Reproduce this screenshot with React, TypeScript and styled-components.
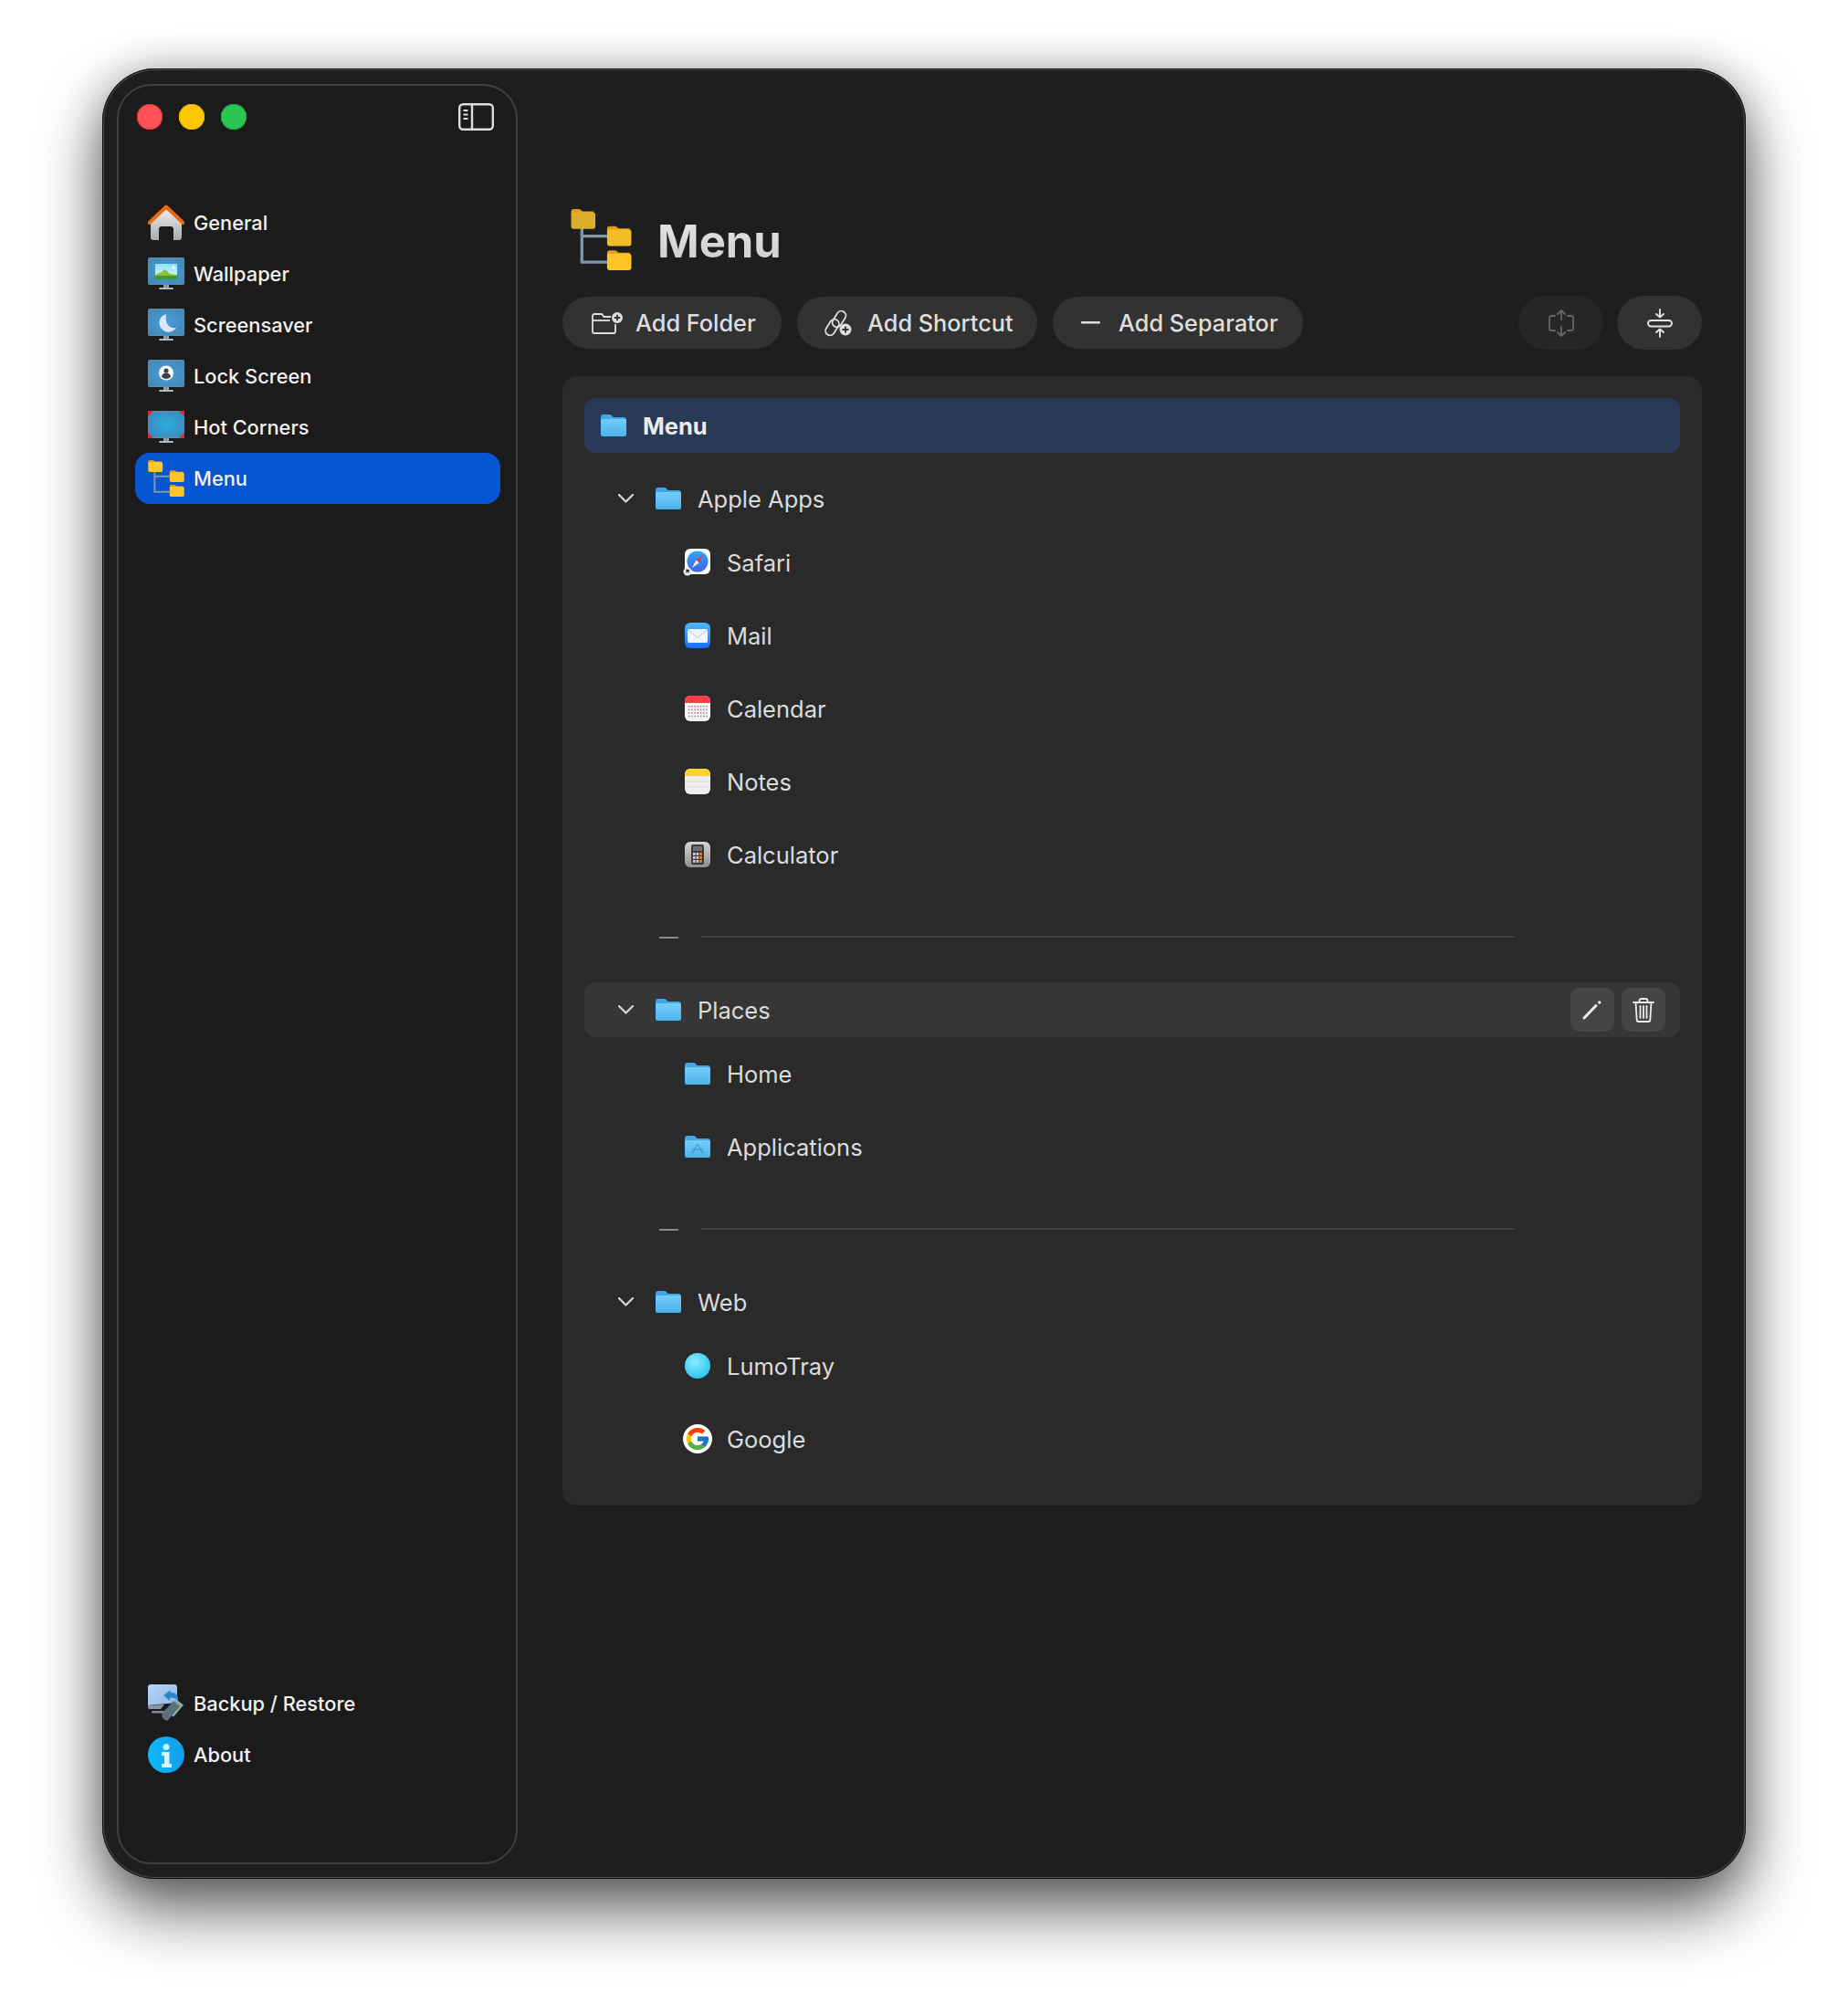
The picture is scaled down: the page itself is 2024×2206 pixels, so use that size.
import React from "react";
import styled, { createGlobalStyle } from "styled-components";

const Global = createGlobalStyle`
  html, body { margin: 0; background: #fff; }
  body { font-family: Inter, "Noto Sans", "Liberation Sans", sans-serif; -webkit-font-smoothing: antialiased; }
`;

const Page = styled.div`
  width: 2024px;
  height: 2206px;
  padding: 75px 0 0 112px;
  box-sizing: border-box;
  overflow: hidden;
`;

const Win = styled.div`
  width: 1800px;
  height: 1983px;
  box-sizing: border-box;
  display: flex;
  background: #1e1e1e;
  border-radius: 58px;
  box-shadow: inset 0 0 0 1px #0c0c0c, inset 0 0 0 2px #4e4e4e, 0 34px 70px rgba(0, 0, 0, 0.62), 0 0 44px rgba(0, 0, 0, 0.22);
`;

const Sidebar = styled.aside`
  width: 439px;
  height: 1950px;
  margin: 17px 0 0 16px;
  box-sizing: border-box;
  flex: none;
  display: flex;
  flex-direction: column;
  background: #1b1b1b;
  border: 2px solid #3f3f3f;
  border-radius: 38px;
  padding: 18px 17px 90px 18px;
`;

const TitleBar = styled.div`
  height: 32px;
  display: flex;
  align-items: center;
  gap: 18px;
  padding: 0 7px 0 2px;
  margin-bottom: 72px;
`;

const Light = styled.span<{ $c: string; $b: string }>`
  width: 28px;
  height: 28px;
  border-radius: 50%;
  background: ${(p) => p.$c};
  box-shadow: inset 0 0 0 1px ${(p) => p.$b};
`;

const ToggleBtn = styled.span`
  margin-left: auto;
  display: flex;
  svg { display: block; }
`;

const Nav = styled.nav<{ $bottom?: boolean }>`
  display: flex;
  flex-direction: column;
  ${(p) => (p.$bottom ? "margin-top: auto;" : "")}
`;

const NavRow = styled.div<{ $on?: boolean }>`
  height: 56px;
  display: flex;
  align-items: center;
  gap: 10px;
  padding-left: 14px;
  border-radius: 16px;
  font-size: 21.8px;
  font-weight: 450;
  color: #f1f1f1;
  background: ${(p) => (p.$on ? "#0656d2" : "transparent")};
  svg { flex: none; display: block; }
`;

const Main = styled.main`
  flex: 1;
  min-width: 0;
  padding: 153px 48px 0 49px;
`;

const Header = styled.header`
  height: 68px;
  display: flex;
  align-items: center;
  padding-left: 9px;
  gap: 28px;
  svg { display: block; }
`;

const Title = styled.h1`
  margin: 0;
  padding-top: 5px;
  font-size: 49px;
  line-height: 68px;
  font-weight: 700;
  background: linear-gradient(180deg, #ececec, #c8c8c8);
  -webkit-background-clip: text;
  background-clip: text;
  color: transparent;
`;

const Toolbar = styled.div`
  display: flex;
  align-items: center;
  gap: 17px;
  margin: 28px 0 29px;
  height: 59px;
`;

const PillBtn = styled.button<{ $w: number; $pad: number; $gap: number }>`
  width: ${(p) => p.$w}px;
  height: 57px;
  padding: 0 0 0 ${(p) => p.$pad}px;
  border: 0;
  border-radius: 28px;
  background: #323232;
  color: #dedede;
  font: 450 25.3px Inter, sans-serif;
  display: flex;
  align-items: center;
  gap: ${(p) => p.$gap}px;
  svg { display: block; flex: none; }
`;

const RoundBtn = styled.button<{ $off?: boolean }>`
  width: 93px;
  height: 59px;
  padding: 0;
  border: 0;
  border-radius: 30px;
  background: ${(p) => (p.$off ? "#262626" : "#323232")};
  display: flex;
  align-items: center;
  justify-content: center;
  ${(p) => (p.$off ? "margin-left: auto; margin-right: -2px;" : "")}
  svg { display: block; }
`;

const Panel = styled.section`
  height: 1237px;
  box-sizing: border-box;
  background: #2a2a2a;
  border-radius: 16px;
  padding: 24px 24px 33px;
`;

const RootRow = styled.div`
  height: 60px;
  display: flex;
  align-items: center;
  gap: 18px;
  padding-left: 18px;
  margin-bottom: 20px;
  border-radius: 12px;
  background: #283a58;
  color: #ececec;
  font-size: 25.5px;
  font-weight: 650;
  svg { display: block; flex: none; }
`;

const FolderRow = styled.div<{ $hover?: boolean }>`
  height: 60px;
  display: flex;
  align-items: center;
  padding: 0 16px 0 37px;
  border-radius: 12px;
  background: ${(p) => (p.$hover ? "#363636" : "transparent")};
  color: #dcdcdc;
  font-size: 25.5px;
  svg { display: block; flex: none; }
`;

const Chevron = styled.span`
  width: 17px;
  margin-right: 24px;
  display: flex;
`;

const FolderName = styled.span`
  margin-left: 18px;
`;

const RowActions = styled.div`
  margin-left: auto;
  display: flex;
  gap: 8px;
`;

const ActionBtn = styled.button`
  width: 48px;
  height: 48px;
  padding: 0;
  border: 0;
  border-radius: 10px;
  background: #454545;
  display: flex;
  align-items: center;
  justify-content: center;
`;

const ItemRow = styled.div`
  height: 80px;
  display: flex;
  align-items: center;
  gap: 18px;
  padding-left: 110px;
  color: #dcdcdc;
  font-size: 25.5px;
  svg { display: block; flex: none; }
`;

const SepRow = styled.div`
  height: 100px;
  display: flex;
  align-items: center;
  padding-left: 82px;
  gap: 25px;
`;

const SepDash = styled.span`
  width: 21px;
  height: 2px;
  margin-top: 2px;
  background: #8a8a8a;
`;

const SepLine = styled.span`
  width: 891px;
  height: 2px;
  background: #424242;
`;

const SafariSvg = styled.svg`
  margin-left: -2px;
`;

const GoogleSvg = styled.svg`
  margin: 0 -2px;
`;

/* ---------- icons ---------- */

const FolderIcon = ({ id }: { id: string }) => (
  <svg width="28" height="24" viewBox="0 0 28 24">
    <defs>
      <linearGradient id={id} x1="0" y1="0" x2="0" y2="1">
        <stop offset="0" stopColor="#74cdf9" />
        <stop offset="1" stopColor="#4ab2ec" />
      </linearGradient>
    </defs>
    <path d="M0 3a3 3 0 0 1 3-3h6.5c1.2 0 1.8.6 2.5 1.3L13.5 3H25a3 3 0 0 1 3 3v4H0z" fill="#3fa9e6" />
    <path d="M0 7a2 2 0 0 1 2-2h24a2 2 0 0 1 2 2v15a2 2 0 0 1-2 2H2a2 2 0 0 1-2-2z" fill={`url(#${id})`} />
  </svg>
);

const AppsFolderIcon = () => (
  <svg width="28" height="24" viewBox="0 0 28 24">
    <defs>
      <linearGradient id="appf" x1="0" y1="0" x2="0" y2="1">
        <stop offset="0" stopColor="#74cdf9" />
        <stop offset="1" stopColor="#4ab2ec" />
      </linearGradient>
    </defs>
    <path d="M0 3a3 3 0 0 1 3-3h6.5c1.2 0 1.8.6 2.5 1.3L13.5 3H25a3 3 0 0 1 3 3v4H0z" fill="#3fa9e6" />
    <path d="M0 7a2 2 0 0 1 2-2h24a2 2 0 0 1 2 2v15a2 2 0 0 1-2 2H2a2 2 0 0 1-2-2z" fill="url(#appf)" />
    <path d="M14 9l-5 9M14 9l5 9M8 15h12M7 18h3M18 18h3" stroke="#3a94cc" strokeWidth="1" fill="none" />
  </svg>
);

const ChevronIcon = () => (
  <svg width="17" height="10" viewBox="0 0 17 10">
    <path d="M1 1l7.5 7.5L16 1" stroke="#d8d8d8" strokeWidth="2.200" fill="none" strokeLinecap="round" strokeLinejoin="round" />
  </svg>
);

const TREE_FOLDERS = [
  [0, 0],
  [40, 19],
  [40, 46],
];

const TreeIcon = ({ w, colors }: { w: number; colors: string[] }) => (
  <svg width={w} height={w} viewBox="0 0 67 68">
    <path d="M12 20v39h28M12 30h28" stroke="#7f97ad" strokeWidth="3.400" fill="none" />
    {TREE_FOLDERS.map(([x, y], i) => (
      <g key={i} transform={`translate(${x} ${y})`}>
        <path d="M0 3a3 3 0 0 1 3-3h6c2 0 2.500 2.500 4 2.500h12v4H0z" fill="#e89a1e" />
        <rect y="3.500" width="27" height="18.500" rx="3" fill={colors[i]} />
      </g>
    ))}
  </svg>
);

const HomeIcon = () => (
  <svg width="40" height="40" viewBox="0 0 40 40">
    <defs>
      <linearGradient id="homeb" x1="0" y1="0" x2="0" y2="1">
        <stop offset="0" stopColor="#ededed" />
        <stop offset="1" stopColor="#a9a9a9" />
      </linearGradient>
    </defs>
    <path d="M3 19L20 5l17 14v17a3 3 0 0 1-3 3h-6V27a3 3 0 0 0-3-3h-10a3 3 0 0 0-3 3v12H6a3 3 0 0 1-3-3z" fill="url(#homeb)" />
    <path d="M1.500 20L20 2.500 38.500 20" stroke="#e86a10" strokeWidth="4" fill="none" strokeLinecap="round" strokeLinejoin="round" />
  </svg>
);

const Monitor = ({ id, children, hot }: { id: string; children?: React.ReactNode; hot?: boolean }) => (
  <svg width="40" height="36" viewBox="0 0 40 36">
    <defs>
      <radialGradient id={id} cx="50%" cy="50%" r="65%">
        <stop offset="0" stopColor={hot ? "#2aaede" : "#4b9fd4"} />
        <stop offset="1" stopColor={hot ? "#3e86b8" : "#3f88bb"} />
      </radialGradient>
    </defs>
    <rect x="0.500" y="0.500" width="39" height="29" rx="1" fill={`url(#${id})`} stroke="#6b8ba3" />
    <rect x="17" y="30" width="6" height="3" fill="#8f9aa2" />
    <rect x="12" y="33" width="16" height="2" rx="1" fill="#b2b8bc" />
    {children}
  </svg>
);

const WallpaperIcon = () => (
  <Monitor id="m1">
    <defs>
      <linearGradient id="wsky" x1="0" y1="0" x2="0" y2="1">
        <stop offset="0" stopColor="#8fe4f6" />
        <stop offset="1" stopColor="#d9f5f5" />
      </linearGradient>
    </defs>
    <rect x="8" y="7" width="24" height="17" fill="url(#wsky)" />
    <circle cx="28" cy="11" r="1.600" fill="#fff" />
    <path d="M8 19l7-3 4-3 5 5 8 1v5H8z" fill="#8fbf3a" />
    <path d="M8 20h24v4H8z" fill="#3e9a2e" />
  </Monitor>
);

const MoonIcon = () => (
  <Monitor id="m2">
    <path d="M20 6a10 10 0 1 0 11 15c-6 1.500-13-3-11-15z" fill="#dbe6f8" />
  </Monitor>
);

const LockIcon = () => (
  <Monitor id="m3">
    <circle cx="20" cy="14.500" r="8" fill="#fff" />
    <circle cx="20" cy="12" r="2.600" fill="#3b4148" />
    <path d="M15 19c0-3 2.200-4.500 5-4.500s5 1.500 5 4.500a8 8 0 0 1-10 0z" fill="#3b4148" />
  </Monitor>
);

const HotCornerIcon = () => (
  <Monitor id="m4" hot>
    <path d="M0 0h6L0 6zM40 0h-6l6 6zM0 30h6l-6-6zM40 30h-6l6-6z" fill="#e3242b" />
  </Monitor>
);

const BackupIcon = () => (
  <svg width="40" height="42" viewBox="0 0 40 42">
    <defs>
      <linearGradient id="bku" x1="0" y1="0" x2="1" y2="1">
        <stop offset="0" stopColor="#b6d6f5" />
        <stop offset="1" stopColor="#8fb9e3" />
      </linearGradient>
    </defs>
    <path d="M0 3a3 3 0 0 1 3-3h26a3 3 0 0 1 3 3v17L0 23z" fill="url(#bku)" />
    <path d="M0 23l18-1-4 5H2a2 2 0 0 1-2-2z" fill="#8795a0" />
    <rect x="4" y="29" width="16" height="2.500" rx="1.200" fill="#7e8a94" />
    <path d="M33 18c1-6-3-10-9-9l1-3-8 6 7 6 0-3c4-1 7 0 9 3z" fill="#2a86c8" />
    <path d="M30 15.500l9 7-11 13-3-2.500z" fill="#9aa6ad" />
    <path d="M17 30l11-12 7 6-12 14c-1.500 2-3 2-5 .5l-2-2c-1.500-2-1-4 1-6.500z" fill="#56727f" />
    <circle cx="21" cy="35" r="1.300" fill="#e8313a" />
  </svg>
);

const InfoIcon = () => (
  <svg width="40" height="40" viewBox="0 0 40 40">
    <defs>
      <linearGradient id="inf" x1="0" y1="0" x2="1" y2="0">
        <stop offset="0" stopColor="#0cbaf8" />
        <stop offset="1" stopColor="#149ee8" />
      </linearGradient>
    </defs>
    <circle cx="20" cy="20" r="20" fill="url(#inf)" />
    <circle cx="20" cy="11.500" r="3.500" fill="#cdeffd" />
    <path d="M15 17h8.500v13H26v4H15v-4h3v-9h-3z" fill="#d9f3fd" />
  </svg>
);

const SidebarToggle = () => (
  <svg width="39" height="30" viewBox="0 0 39 30" fill="none" stroke="#dedede" strokeWidth="2.400">
    <rect x="1.200" y="1.200" width="36.600" height="27.600" rx="4" />
    <path d="M15 1.200v27.600" />
    <path d="M5.500 8h5M5.500 12.500h5M5.500 17h5" strokeWidth="1.800" />
  </svg>
);

const AddFolderGlyph = () => (
  <svg width="34" height="24" viewBox="0 0 34 24" fill="none" stroke="#dedede" strokeWidth="1.800">
    <path d="M21 5H13.500L11 2H3a2 2 0 0 0-2 2v17a2 2 0 0 0 2 2h21a2 2 0 0 0 2-2V13" />
    <path d="M1 9h19" />
    <circle cx="28" cy="6" r="6" fill="#dedede" stroke="none" />
    <path d="M28 2.800v6.400M24.800 6h6.400" stroke="#323232" strokeWidth="1.800" />
  </svg>
);

const ShortcutGlyph = () => (
  <svg width="30" height="28" viewBox="0 0 30 28" fill="none" stroke="#dedede" strokeWidth="1.800">
    <rect x="11" y="0" width="10" height="19" rx="5" transform="rotate(32 16 9.500)" />
    <rect x="3.500" y="9" width="10" height="19" rx="5" transform="rotate(32 8.500 18.500)" />
    <circle cx="23" cy="21" r="6.500" fill="#dedede" stroke="none" />
    <path d="M23 17.500v7M19.500 21h7" stroke="#323232" strokeWidth="1.800" />
  </svg>
);

const MinusGlyph = () => (
  <svg width="21" height="3" viewBox="0 0 21 3">
    <rect width="21" height="2.400" rx="1" fill="#dedede" />
  </svg>
);

const ExpandGlyph = () => (
  <svg width="28" height="30" viewBox="0 0 28 30" fill="none" stroke="#666" strokeWidth="1.800" strokeLinecap="round" strokeLinejoin="round">
    <path d="M7 7H3a2 2 0 0 0-2 2v12a2 2 0 0 0 2 2h4M21 7h4a2 2 0 0 1 2 2v12a2 2 0 0 1-2 2h-4" />
    <path d="M14 1v10M10 5l4-4 4 4M14 29V19M10 25l4 4 4-4" />
  </svg>
);

const CollapseGlyph = () => (
  <svg width="28" height="32" viewBox="0 0 28 32" fill="none" stroke="#e2e2e2" strokeWidth="1.900" strokeLinecap="round" strokeLinejoin="round">
    <rect x="1" y="13" width="26" height="6.500" rx="3.250" />
    <path d="M14 1v8.500M10 6l4 3.500L18 6M14 31v-8.500M10 26l4-3.500 4 3.500" />
  </svg>
);

const PencilGlyph = () => (
  <svg width="22" height="22" viewBox="0 0 22 22" fill="none" stroke="#ececec" strokeLinecap="round">
    <path d="M2 20L15 6.500" strokeWidth="3" />
    <circle cx="18.800" cy="3" r="1.700" fill="#ececec" stroke="none" />
  </svg>
);

const TrashGlyph = () => (
  <svg width="24" height="27" viewBox="0 0 24 27" fill="none" stroke="#ececec" strokeWidth="1.800" strokeLinecap="round">
    <path d="M1 5h22M7.500 5V3a2 2 0 0 1 2-2h5a2 2 0 0 1 2 2v2" />
    <path d="M3.500 5l1.200 19a2 2 0 0 0 2 2h10.600a2 2 0 0 0 2-2L20.500 5" />
    <path d="M8.500 9v13M12 9v13M15.500 9v13" />
  </svg>
);

const SafariIcon = () => (
  <SafariSvg width="30" height="30" viewBox="0 0 30 30">
    <defs>
      <linearGradient id="saf" x1="0" y1="0" x2="0" y2="1">
        <stop offset="0" stopColor="#2fa8f5" />
        <stop offset="1" stopColor="#3e62ee" />
      </linearGradient>
    </defs>
    <rect x="2" y="0" width="28" height="28" rx="6" fill="#fbfbfb" />
    <circle cx="16" cy="14" r="11.500" fill="url(#saf)" />
    <path d="M22 7l-4.500 8.500-3-3z" fill="#ef3f3a" />
    <path d="M10 21l4.500-8.500 3 3z" fill="#fff" />
    <circle cx="5" cy="25" r="4.500" fill="#e8e8e8" />
    <path d="M3.500 27l0-4.500 4 .8-1.400 1 1 1.400-1 .8-1-1.400z" fill="#222" />
  </SafariSvg>
);

const MailIcon = () => (
  <svg width="28" height="28" viewBox="0 0 28 28">
    <defs>
      <linearGradient id="mail" x1="0" y1="0" x2="0" y2="1">
        <stop offset="0" stopColor="#4cb9fb" />
        <stop offset="1" stopColor="#1a6ef5" />
      </linearGradient>
    </defs>
    <rect width="28" height="28" rx="6" fill="url(#mail)" />
    <rect x="3" y="7" width="22" height="15" rx="2" fill="#f1f6fe" />
    <path d="M3.500 8L14 16.500 24.500 8" stroke="#a9c8f2" strokeWidth="1" fill="none" />
  </svg>
);

const CalendarIcon = () => (
  <svg width="28" height="28" viewBox="0 0 28 28">
    <rect width="28" height="28" rx="6" fill="#f4f4f4" />
    <path d="M0 8V6a6 6 0 0 1 6-6h16a6 6 0 0 1 6 6v2z" fill="#fa3e48" />
    {[0, 1, 2, 3].map((r) =>
      [0, 1, 2, 3, 4, 5, 6].map((c) => (
        <rect key={`${r}-${c}`} x={4 + c * 3.200} y={11 + r * 3.600} width="1.500" height="1.500" fill={r === 2 && c === 3 ? "#f23b45" : "#8a8a8a"} />
      )),
    )}
  </svg>
);

const NotesIcon = () => (
  <svg width="28" height="28" viewBox="0 0 28 28">
    <rect width="28" height="28" rx="6" fill="#efefef" />
    <path d="M0 8V6a6 6 0 0 1 6-6h16a6 6 0 0 1 6 6v2z" fill="#ffd12e" />
    <path d="M0 14h28M0 20h28" stroke="#dcdcdc" strokeWidth="1" />
  </svg>
);

const CalculatorIcon = () => (
  <svg width="28" height="28" viewBox="0 0 28 28">
    <defs>
      <linearGradient id="calc" x1="0" y1="0" x2="0" y2="1">
        <stop offset="0" stopColor="#d4d4d4" />
        <stop offset="1" stopColor="#8f8f8f" />
      </linearGradient>
    </defs>
    <rect width="28" height="28" rx="6" fill="url(#calc)" />
    <rect x="7" y="3" width="14" height="22" rx="2" fill="#3a3a3a" />
    <rect x="9" y="5" width="10" height="5" fill="#6f6f6f" />
    {[0, 1, 2].map((r) =>
      [0, 1, 2].map((c) => (
        <rect key={`${r}-${c}`} x={9 + c * 3.600} y={12 + r * 4} width="2.600" height="2.800" fill={c === 2 ? "#f08a1d" : "#d8d8d8"} />
      )),
    )}
  </svg>
);

const LumoIcon = () => (
  <svg width="28" height="28" viewBox="0 0 28 28">
    <defs>
      <radialGradient id="lumo" cx="40%" cy="35%" r="70%">
        <stop offset="0" stopColor="#8cecff" />
        <stop offset="1" stopColor="#27c4ee" />
      </radialGradient>
    </defs>
    <circle cx="14" cy="14" r="14" fill="url(#lumo)" />
  </svg>
);

const GoogleIcon = () => (
  <GoogleSvg width="32" height="32" viewBox="0 0 32 32">
    <circle cx="16" cy="16" r="16" fill="#fff" />
    <g transform="translate(1.600 1.600) scale(0.6)">
      <path fill="#FFC107" d="M43.600 20.100H42V20H24v8h11.300C33.700 32.700 29.200 36 24 36c-6.600 0-12-5.400-12-12s5.400-12 12-12c3.100 0 5.800 1.200 8 3l5.700-5.700C34 6.100 29.300 4 24 4 13 4 4 13 4 24s9 20 20 20 20-9 20-20c0-1.300-.1-2.700-.4-3.900z" />
      <path fill="#FF3D00" d="M6.300 14.700l6.600 4.800C14.700 15.100 19 12 24 12c3.100 0 5.800 1.200 8 3l5.700-5.700C34 6.100 29.300 4 24 4 16.300 4 9.700 8.300 6.300 14.700z" />
      <path fill="#4CAF50" d="M24 44c5.200 0 9.900-2 13.400-5.200l-6.200-5.200C29.200 35.100 26.700 36 24 36c-5.200 0-9.600-3.300-11.300-8l-6.500 5C9.500 39.600 16.200 44 24 44z" />
      <path fill="#1976D2" d="M43.600 20.100H42V20H24v8h11.300c-.8 2.200-2.200 4.200-4.100 5.600l6.200 5.200C37 39.200 44 34 44 24c0-1.300-.1-2.700-.4-3.900z" />
    </g>
  </GoogleSvg>
);

export default function App() {
  return (
    <>
      <Global />
      <Page>
        <Win>
          <Sidebar>
            <TitleBar>
              <Light $c="#ff5257" $b="#e6303a" />
              <Light $c="#fdc700" $b="#e8b400" />
              <Light $c="#2dc653" $b="#1fb042" />
              <ToggleBtn>
                <SidebarToggle />
              </ToggleBtn>
            </TitleBar>
            <Nav>
              <NavRow><HomeIcon />General</NavRow>
              <NavRow><WallpaperIcon />Wallpaper</NavRow>
              <NavRow><MoonIcon />Screensaver</NavRow>
              <NavRow><LockIcon />Lock Screen</NavRow>
              <NavRow><HotCornerIcon />Hot Corners</NavRow>
              <NavRow $on><TreeIcon w={40} colors={["#ffc62e", "#ffc62e", "#ffc62e"]} />Menu</NavRow>
            </Nav>
            <Nav $bottom>
              <NavRow><BackupIcon />Backup / Restore</NavRow>
              <NavRow><InfoIcon />About</NavRow>
            </Nav>
          </Sidebar>
          <Main>
            <Header>
              <TreeIcon w={67} colors={["#dcae2c", "#f4bc26", "#ffc524"]} />
              <Title>Menu</Title>
            </Header>
            <Toolbar>
              <PillBtn $w={240} $pad={32} $gap={14}><AddFolderGlyph />Add Folder</PillBtn>
              <PillBtn $w={263} $pad={30} $gap={17}><ShortcutGlyph />Add Shortcut</PillBtn>
              <PillBtn $w={274} $pad={31} $gap={20}><MinusGlyph />Add Separator</PillBtn>
              <RoundBtn $off><ExpandGlyph /></RoundBtn>
              <RoundBtn><CollapseGlyph /></RoundBtn>
            </Toolbar>
            <Panel>
              <RootRow><FolderIcon id="f0" />Menu</RootRow>
              <FolderRow>
                <Chevron><ChevronIcon /></Chevron>
                <FolderIcon id="f1" />
                <FolderName>Apple Apps</FolderName>
              </FolderRow>
              <ItemRow><SafariIcon />Safari</ItemRow>
              <ItemRow><MailIcon />Mail</ItemRow>
              <ItemRow><CalendarIcon />Calendar</ItemRow>
              <ItemRow><NotesIcon />Notes</ItemRow>
              <ItemRow><CalculatorIcon />Calculator</ItemRow>
              <SepRow><SepDash /><SepLine /></SepRow>
              <FolderRow $hover>
                <Chevron><ChevronIcon /></Chevron>
                <FolderIcon id="f2" />
                <FolderName>Places</FolderName>
                <RowActions>
                  <ActionBtn><PencilGlyph /></ActionBtn>
                  <ActionBtn><TrashGlyph /></ActionBtn>
                </RowActions>
              </FolderRow>
              <ItemRow><FolderIcon id="f3" />Home</ItemRow>
              <ItemRow><AppsFolderIcon />Applications</ItemRow>
              <SepRow><SepDash /><SepLine /></SepRow>
              <FolderRow>
                <Chevron><ChevronIcon /></Chevron>
                <FolderIcon id="f4" />
                <FolderName>Web</FolderName>
              </FolderRow>
              <ItemRow><LumoIcon />LumoTray</ItemRow>
              <ItemRow><GoogleIcon />Google</ItemRow>
            </Panel>
          </Main>
        </Win>
      </Page>
    </>
  );
}
